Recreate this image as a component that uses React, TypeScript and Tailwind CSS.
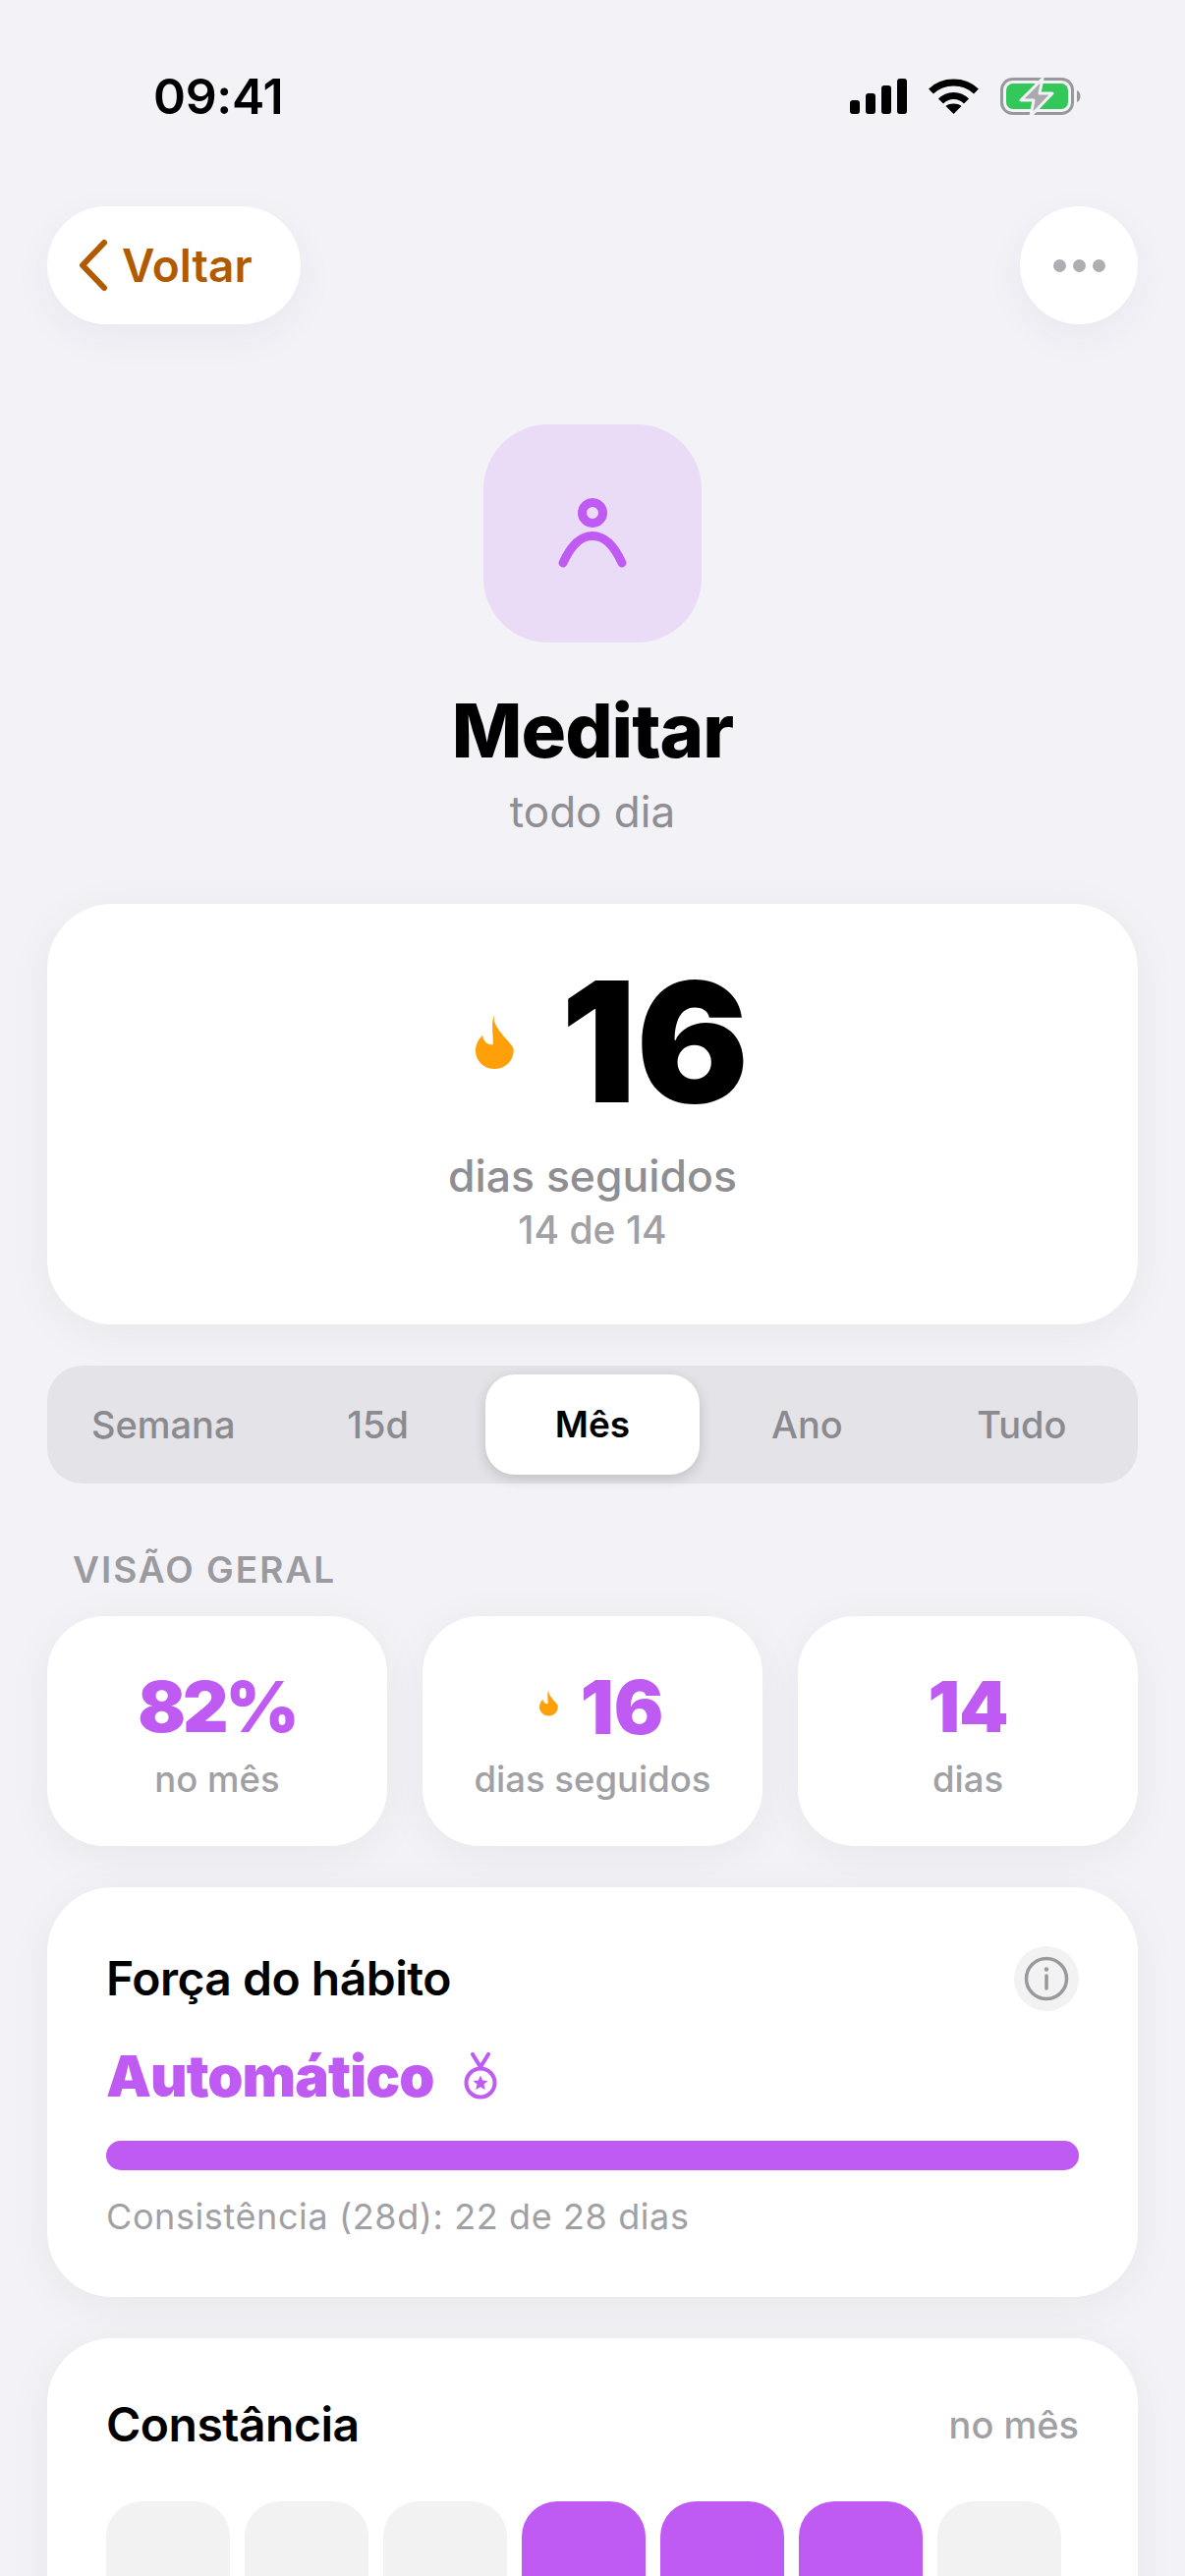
import React from "react"

function Flame({ className }: { className: string }) {
  return (
    <svg viewBox="0 0 39 57" className={className} fill="#ff9f0a" aria-hidden="true">
      <path d="M19.3 0C17 8 22 14 28 22C34 29 38.7 33 38.7 37C38.7 48 30 56 19.3 56C8.7 56 0 48 0 37.7C0 31 3 25.5 7.3 21.7C7.5 27 11 31.5 17.7 31.3C18.5 24 15 10 19.3 0Z" />
    </svg>
  )
}

function StatusIcons() {
  return (
    <div className="flex items-center">
      <svg width="58" height="36" viewBox="0 0 58 36" fill="#000" aria-hidden="true">
        <rect x="0" y="22" width="10" height="14" rx="3" />
        <rect x="16" y="15" width="10" height="21" rx="3" />
        <rect x="32" y="7" width="10" height="29" rx="3" />
        <rect x="48" y="0" width="10" height="36" rx="3" />
      </svg>
      <svg width="51" height="36" viewBox="0 0 51 36" fill="none" className="ml-[22px]" aria-hidden="true">
        <path d="M2.5 13C15 1 36 1 48.5 13" stroke="#000" strokeWidth="7" />
        <path d="M12.5 23C19.5 15.5 31.5 15.5 38.5 23" stroke="#000" strokeWidth="7" />
        <path d="M25.5 36L17.5 28C22 24.8 29 24.8 33.5 28Z" fill="#000" />
      </svg>
      <svg width="82" height="42" viewBox="0 0 82 42" fill="none" className="ml-[22px]" aria-hidden="true">
        <rect x="1.5" y="3.5" width="72" height="35" rx="11" stroke="#98989d" strokeWidth="3" />
        <rect x="6" y="8" width="63" height="26" rx="7" fill="#34c759" />
        <path d="M78 15C80.5 16 81.5 18.5 81.5 21C81.5 23.5 80.5 26 78 27Z" fill="#98989d" />
        <path d="M43 3L21 25H34L31 41L53 18H40Z" fill="#a9a9ae" stroke="#f2f2f7" strokeWidth="3" strokeLinejoin="round" />
      </svg>
    </div>
  )
}

function StatCard({ value, label, flame, valueClass }: { value: string; label: string; flame?: boolean; valueClass: string }) {
  return (
    <div className="flex h-[234px] flex-col items-center rounded-[58px] bg-white pt-[56px] shadow-[0_8px_48px_rgba(0,0,0,0.05)]">
      <div className={`flex h-[72px] items-center leading-none font-black text-[#bf5af2] ${valueClass}`}>
        {flame && <Flame className="mr-[23px] mb-[8px] ml-[18px] h-[28px] w-[19px]" />}
        {value}
      </div>
      <div className="mt-[16px] text-[36.5px] leading-[44px] font-medium text-[#a0a0a5]">{label}</div>
    </div>
  )
}

const tabs = ["Semana", "15d", "Mês", "Ano", "Tudo"]
const monthCells = [false, false, false, true, true, true, false]

export default function App() {
  return (
    <div className="h-[2622px] w-[1206px] overflow-hidden bg-[#f2f2f7] font-['Inter',sans-serif] text-black">
      {/* status bar */}
      <div className="flex h-[210px] items-start justify-between pt-[70px] pr-[106px] pl-[156px]">
        <span className="text-[50px] leading-[56px] font-semibold tracking-[-0.3px]">09:41</span>
        <div className="pt-[7px]">
          <StatusIcons />
        </div>
      </div>

      {/* nav */}
      <div className="flex items-center justify-between px-[48px]">
        <div className="flex h-[120px] w-[258px] items-center rounded-full bg-white pl-[30px] shadow-[0_12px_40px_rgba(60,60,90,0.05)]">
          <svg width="34" height="54" viewBox="0 0 34 54" fill="none" aria-hidden="true">
            <path d="M28 4L6 27L28 50" stroke="#b25a00" strokeWidth="6" strokeLinecap="round" strokeLinejoin="round" />
          </svg>
          <span className="ml-[12px] text-[46px] leading-none font-semibold text-[#b25a00]">Voltar</span>
        </div>
        <div className="flex h-[120px] w-[120px] items-center justify-center gap-[7px] rounded-full bg-white shadow-[0_12px_40px_rgba(60,60,90,0.05)]">
          <span className="h-[13px] w-[13px] rounded-full bg-[#aeaeb2]" />
          <span className="h-[13px] w-[13px] rounded-full bg-[#aeaeb2]" />
          <span className="h-[13px] w-[13px] rounded-full bg-[#aeaeb2]" />
        </div>
      </div>

      {/* habit header */}
      <div className="mt-[102px] flex flex-col items-center">
        <div className="flex h-[222px] w-[222px] items-center justify-center rounded-[66px] bg-[#eadcf7]">
          <svg width="84" height="84" viewBox="0 0 84 84" fill="none" stroke="#bf5af2" strokeWidth="9" strokeLinecap="round" aria-hidden="true">
            <circle cx="42" cy="21" r="10.5" />
            <path d="M12 72C22 50 32 44.5 42 44.5C52 44.5 62 50 72 72" />
          </svg>
        </div>
        <h1 className="mt-[43px] text-[76px] leading-[92px] font-extrabold tracking-[-1px]">Meditar</h1>
        <p className="mt-[11px] text-[44px] leading-[52px] text-[#8e8e93]">todo dia</p>
      </div>

      {/* streak card */}
      <div className="mx-[48px] mt-[68px] flex h-[428px] flex-col items-center rounded-[66px] bg-white pt-[58px] shadow-[0_8px_48px_rgba(0,0,0,0.05)]">
        <div className="flex h-[164px] items-center">
          <Flame className="mr-[48px] ml-[40px] h-[57px] w-[39px]" />
          <span className="text-[170px] leading-none font-black">16</span>
        </div>
        <div className="mt-[28px] text-[44.5px] leading-[54px] font-medium text-[#8e8e93]">dias seguidos</div>
        <div className="mt-[5px] text-[39px] leading-[46px] font-medium text-[#a0a0a5]">14 de 14</div>
      </div>

      {/* range tabs */}
      <div className="mx-[48px] mt-[42px] grid h-[120px] grid-cols-5 rounded-[36px] bg-[#e3e3e8] p-[9px]">
        {tabs.map((tab) => (
          <div
            key={tab}
            className={
              tab === "Mês"
                ? "flex items-center justify-center rounded-[30px] bg-white text-[37px] font-semibold text-black shadow-[0_4px_14px_rgba(0,0,0,0.16)]"
                : "flex items-center justify-center text-[38px] font-medium text-[#8a8a8f]"
            }
          >
            {tab}
          </div>
        ))}
      </div>

      {/* overview */}
      <div className="mt-[66px] pl-[74px] text-[37px] leading-[44px] font-semibold tracking-[2px] text-[#9a9a9f]">VISÃO GERAL</div>
      <div className="mx-[48px] mt-[25px] grid grid-cols-3 gap-[36px]">
        <StatCard value="82%" label="no mês" valueClass="text-[72px] tracking-[-3px]" />
        <StatCard value="16" label="dias seguidos" flame valueClass="text-[75px] tracking-[0px]" />
        <StatCard value="14" label="dias" valueClass="text-[72px] tracking-[-1px]" />
      </div>

      {/* habit strength */}
      <div className="mx-[48px] mt-[42px] h-[417px] rounded-[66px] bg-white px-[60px] pt-[60px] shadow-[0_8px_48px_rgba(0,0,0,0.05)]">
        <div className="flex h-[66px] items-center justify-between">
          <h2 className="text-[48px] leading-none font-semibold tracking-[-0.5px]">Força do hábito</h2>
          <div className="flex h-[66px] w-[66px] items-center justify-center rounded-full bg-[#f2f2f2]">
            <svg width="46" height="46" viewBox="0 0 46 46" fill="none" stroke="#98989d" aria-hidden="true">
              <circle cx="23" cy="23" r="20.5" strokeWidth="3.5" />
              <path d="M23 20V33" strokeWidth="3.5" strokeLinecap="round" />
              <circle cx="23" cy="13.5" r="2.2" fill="#98989d" stroke="none" />
            </svg>
          </div>
        </div>
        <div className="mt-[30px] flex h-[72px] items-center">
          <span className="text-[58px] leading-none font-black tracking-[-1px] text-[#bf5af2]">Automático</span>
          <svg width="34" height="48" viewBox="0 0 34 48" fill="none" stroke="#bf5af2" strokeWidth="4" strokeLinecap="round" className="ml-[30px]" aria-hidden="true">
            <path d="M9 2L17 15L25 2" />
            <circle cx="17" cy="31" r="14.5" />
            <path d="M17 23.5L19.2 28.5L24.6 29L20.5 32.6L21.8 38L17 35.2L12.2 38L13.5 32.6L9.4 29L14.8 28.5Z" fill="#bf5af2" stroke="none" />
          </svg>
        </div>
        <div className="mt-[30px] h-[30px] rounded-full bg-[#bf5af2]" />
        <p className="mt-[25px] text-[36px] leading-[44px] tracking-[0.6px] text-[#a0a0a5]">Consistência (28d): 22 de 28 dias</p>
      </div>

      {/* constancy */}
      <div className="mx-[48px] mt-[42px] h-[400px] rounded-t-[66px] bg-white px-[60px] pt-[66px] shadow-[0_8px_48px_rgba(0,0,0,0.05)]">
        <div className="flex h-[44px] items-center justify-between">
          <h2 className="text-[48px] leading-none font-semibold tracking-[-0.5px]">Constância</h2>
          <span className="text-[38px] leading-none font-medium text-[#a0a0a5]">no mês</span>
        </div>
        <div className="mt-[56px] flex gap-[15px]">
          {monthCells.map((on, i) => (
            <div key={i} className={on ? "h-[126px] w-[126px] rounded-[36px] bg-[#bf5af2]" : "h-[126px] w-[126px] rounded-[36px] bg-[#f2f2f2]"} />
          ))}
        </div>
      </div>
    </div>
  )
}
